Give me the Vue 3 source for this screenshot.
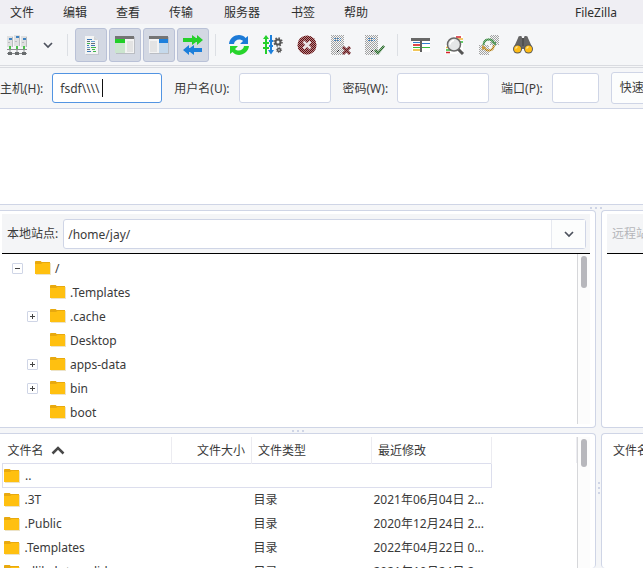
<script setup>
import { ref } from 'vue'

const menus = ['文件', '编辑', '查看', '传输', '服务器', '书签', '帮助']

const fields = ref([
  { id: 'host', label: '主机(H):', value: 'fsdf\\\\\\\\', size: 'large', type: 'text', focused: true },
  { id: 'user', label: '用户名(U):', value: '', size: 'medium', type: 'text' },
  { id: 'pass', label: '密码(W):', value: '', size: 'medium', type: 'password' },
  { id: 'port', label: '端口(P):', value: '', size: 'small', type: 'text' }
])

const localPath = ref('/home/jay/')

const tree = [
  { name: '/', level: 'root', toggle: '−' },
  { name: '.Templates', level: 'child' },
  { name: '.cache', level: 'child', toggle: '+' },
  { name: 'Desktop', level: 'child' },
  { name: 'apps-data', level: 'child', toggle: '+' },
  { name: 'bin', level: 'child', toggle: '+' },
  { name: 'boot', level: 'child' }
]

const files = [
  { name: '..', type: '', date: '', current: true },
  { name: '.3T', type: '目录', date: '2021年06月04日 2...' },
  { name: '.Public', type: '目录', date: '2020年12月24日 2...' },
  { name: '.Templates', type: '目录', date: '2022年04月22日 0...' },
  { name: '.dlibcb-to-valid', type: '目录', date: '2021年10月24日 2...' }
]
</script>

<template>
  <div class="window">
    <svg class="defs" aria-hidden="true">
      <defs>
        <pattern id="dither" width="2" height="2" patternUnits="userSpaceOnUse">
          <rect width="1" height="1" fill="#fff" />
          <rect x="1" y="1" width="1" height="1" fill="#fff" />
        </pattern>
        <mask id="dithered" maskUnits="userSpaceOnUse" x="0" y="0" width="20" height="20">
          <rect width="20" height="20" fill="url(#dither)" />
        </mask>
        <symbol id="folder" viewBox="0 0 16 16">
          <path d="M1 3h15v12H1z" fill="#ece3c8" />
          <path d="M0 2.500Q0 1 1 1h4.500l1 1h8q.5 0 .5.500V14H0z" fill="#ffc010" />
          <path d="M0 2.500Q0 1 1 1h4.500l1 1h8q.5 0 .5.500V3H7.500L6 4H0z" fill="#e8a90f" />
        </symbol>
        <symbol id="chevron" viewBox="0 0 12 12">
          <path d="M2 4l4 4 4-4" fill="none" stroke="#4d525e" stroke-width="1.700" />
        </symbol>
      </defs>
    </svg>

    <nav class="menubar">
      <button v-for="m in menus" :key="m" class="menu" :class="{ wide: m.length > 2 }">{{ m }}</button>
      <span class="title">FileZilla</span>
    </nav>

    <div class="toolbar">
      <button class="tool" aria-label="站点管理器">
        <svg class="icon" viewBox="0 0 20 20">
          <g fill="#dfe0e1"><path d="M0 1h6v11H0zM7 0h6v11H7zM14 1h6v11h-6z" /></g>
          <g fill="#b9bcbf"><path d="M5 2h1v10H5zM12 1h1v10h-1zM19 2h1v10h-1zM1 7h2v1H1zM8 6h2v1H8zM15 7h2v1h-2z" /></g>
          <g fill="#3f83c2"><path d="M2 3h3v2H2zM9 1h3v2H9zM16 3h3v2h-3z" /></g>
          <g fill="#4ac34a"><path d="M2 11h2v3H2zM9 11h2v3H9zM16 11h2v3h-2z" /></g>
          <path d="M0 14.500h20M3 14v4M10 14v4M17 14v4M0 18.500h20" fill="none" stroke="#8b8e90" />
          <path d="M1 17h4v3H1zM8 17h4v3H8zM15 17h4v3h-4z" fill="#686c6e" />
        </svg>
      </button>
      <button class="tool drop" aria-label="站点列表"><svg class="chevron"><use href="#chevron" /></svg></button>
      <span class="sep"></span>
      <button class="tool on" aria-label="消息日志">
        <svg class="icon" viewBox="0 0 20 20">
          <path d="M5 2h9l4 4v14H5z" fill="#c3c7d0" />
          <path d="M4 1h9l4 4v14H4z" fill="#f3f4f4" />
          <path d="M13 1v4h4z" fill="#d2d4d6" />
          <g fill="#3d78b4"><path d="M6 4h5v1H6zM6 10h2v1H6zM10 10h4v1h-4zM6 16h4v1H6z" /></g>
          <g fill="#666f75"><path d="M6 6h3v1H6zM10 8h4v1h-4zM6 14h3v1H6z" /></g>
          <g fill="#3fb54a"><path d="M6 8h3v1H6zM10 12h5v1h-5zM11 14h3v1h-3zM12 16h3v1h-3z" /></g>
          <g fill="#65a3cf"><path d="M10 6h4v1h-4zM6 12h3v1H6z" /></g>
        </svg>
      </button>
      <button class="tool on" aria-label="本地目录树">
        <svg class="icon" viewBox="0 0 20 20">
          <path d="M1 2h19v17H1z" fill="#babdc3" />
          <path d="M0 2h19v16H0z" fill="#f3f3f3" />
          <path d="M0 1h19v3H0z" fill="#747474" />
          <path d="M0 4h10v4H0z" fill="#20cf27" />
          <path d="M0 8h10v10H0z" fill="#cbe5ce" />
          <path d="M12 6h6v11h-6z" fill="#e3e3e3" />
        </svg>
      </button>
      <button class="tool on" aria-label="远程目录树">
        <svg class="icon" viewBox="0 0 20 20">
          <path d="M1 2h19v17H1z" fill="#babdc3" />
          <path d="M0 2h19v16H0z" fill="#f3f3f3" />
          <path d="M0 1h19v3H0z" fill="#747474" />
          <path d="M10 4h9v4h-9z" fill="#1d80dc" />
          <path d="M10 8h9v10h-9z" fill="#c5d9eb" />
          <path d="M1 6h7v11H1z" fill="#e3e3e3" />
        </svg>
      </button>
      <button class="tool on" aria-label="传输队列">
        <svg class="icon" viewBox="0 0 20 20">
          <path d="M0 3h9V0l4 3h1V0l6 5-6 5V7h-1l-4 3V7H0z" fill="#25d02b" />
          <path d="M19 13h-8v-3l-4 3H6v-3l-6 5 6 5v-3h1l4 3v-3h8z" fill="#1c7fdb" />
        </svg>
      </button>
      <span class="sep"></span>
      <button class="tool" aria-label="刷新">
        <svg class="icon" viewBox="0 0 20 20">
          <path d="M0 9C1 0 12-2.500 16.500 3L19 1v8h-8l3-3C11 3 5.500 4.500 5 9z" fill="#1c7ad7" />
          <path d="M20 11c-1 9-12 11.500-16.500 6L1 19v-8h8l-3 3c3 3 8.500 1.500 9-3z" fill="#27d42c" />
        </svg>
      </button>
      <button class="tool" aria-label="处理队列">
        <svg class="icon" viewBox="0 0 20 20">
          <path d="M3 0l3 4H4v3h2v2H4v3h2v2H4v5H2v-5H0v-2h2V9H0V7h2V4H0z" fill="#25cf2b" />
          <path d="M7 0h2v5h1v2H9v3h1v2H9v3h2l-3 4.500L5 15h2v-3H6v-2h1V7H6V5h1z" fill="#1d80dc" />
          <g fill="none" stroke="#555">
            <circle cx="15" cy="7" r="2.500" stroke-width="2" />
            <circle cx="15" cy="7" r="4" stroke-width="1.500" stroke-dasharray="1.500 1.640" />
            <circle cx="16" cy="15" r="1.500" stroke-width="1.500" />
            <circle cx="16" cy="15" r="2.600" stroke-width="1" stroke-dasharray="1 1.040" />
          </g>
        </svg>
      </button>
      <button class="tool" aria-label="取消">
        <svg class="icon" viewBox="0 0 20 20">
          <circle cx="10" cy="10" r="9.500" fill="#b98a8c" />
          <circle cx="10" cy="10" r="9.500" fill="#5f0d10" mask="url(#dithered)" />
          <path d="M6.500 6.500l7 7M13.500 6.500l-7 7" stroke="#e9e4e4" stroke-width="2.500" />
        </svg>
      </button>
      <button class="tool" aria-label="断开连接">
        <svg class="icon" viewBox="0 0 20 20">
          <g mask="url(#dithered)">
            <path d="M0 0h13v20H0z" fill="#a2a2a2" />
            <path d="M6 15h2v2H6z" fill="#222" />
          </g>
          <path d="M3 3.500h7M3 5.500h7" stroke="#4b83b6" stroke-dasharray="2 1" />
          <path d="M12 12l7 7M19 12l-7 7" stroke="#a76f72" stroke-width="2.500" />
          <path d="M12 12l7 7M19 12l-7 7" stroke="#5d1418" stroke-width="2.500" mask="url(#dithered)" />
        </svg>
      </button>
      <button class="tool" aria-label="重新连接">
        <svg class="icon" viewBox="0 0 20 20">
          <g mask="url(#dithered)">
            <path d="M0 0h13v20H0z" fill="#a2a2a2" />
            <path d="M6 15h2v2H6z" fill="#222" />
          </g>
          <path d="M3 3.500h7M3 5.500h7" stroke="#4b83b6" stroke-dasharray="2 1" />
          <path d="M10 15l3 3 6-7" fill="none" stroke="#8fb18f" stroke-width="2.500" />
          <path d="M10 15l3 3 6-7" fill="none" stroke="#286a2b" stroke-width="2.500" mask="url(#dithered)" />
        </svg>
      </button>
      <span class="sep"></span>
      <button class="tool" aria-label="过滤器">
        <svg class="icon" viewBox="0 0 20 20">
          <path d="M1 4h18v13H1z" fill="#fff" />
          <path d="M0 3h19v3H0z" fill="#686868" />
          <path d="M2 7.500h7M11 8.500h8" stroke="#3180cf" />
          <path d="M2 10h7" stroke="#df4a4a" stroke-width="2" />
          <path d="M2 12.500h17" stroke="#36bd3d" />
          <path d="M2 15h7" stroke="#f1c65a" stroke-width="2" />
          <path d="M10 5v12" stroke="#606060" stroke-width="2" />
        </svg>
      </button>
      <button class="tool" aria-label="目录比较">
        <svg class="icon" viewBox="0 0 20 20">
          <path d="M9 0h9v18H9zM0 10h12v9H0z" fill="#fff" />
          <path d="M11 2h5M1 17.500h4" stroke="#d2232a" stroke-width="1.500" />
          <path d="M10 4h8M1 12.500h4" stroke="#f0b93e" stroke-width="1.500" />
          <path d="M1 15h5M15 7h3" stroke="#2fbe36" stroke-width="1.500" />
          <path d="M13 14l5 5" stroke="#555" stroke-width="3" />
          <circle cx="9" cy="9.500" r="6.500" fill="#e4e6e7" stroke="#686868" stroke-width="1.500" />
          <path d="M5 9.500c0-2 2-4 4-4" fill="none" stroke="#fff" stroke-width="1.500" />
        </svg>
      </button>
      <button class="tool" aria-label="同步浏览">
        <svg class="icon" viewBox="0 0 20 20">
          <path d="M11 0h9v10h-9zM0 10h10v10H0z" fill="#a2a2a2" mask="url(#dithered)" />
          <path d="M4.500 10C5 3 13 3 15 8" fill="none" stroke="#83b187" stroke-width="2" />
          <path d="M4.500 10C5 3 13 3 15 8" fill="none" stroke="#3c8d43" stroke-width="2" mask="url(#dithered)" />
          <path d="M12 7h5v4z" fill="#5a985f" />
          <path d="M5 12c2 5 9 5 10-2" fill="none" stroke="#e0c58c" stroke-width="2" />
          <path d="M5 12c2 5 9 5 10-2" fill="none" stroke="#aa7716" stroke-width="2" mask="url(#dithered)" />
          <path d="M3 10v5l4-2z" fill="#c99b40" />
        </svg>
      </button>
      <button class="tool" aria-label="查找文件">
        <svg class="icon" viewBox="0 0 20 20">
          <path d="M5 3q0-2 2-2h1q1 0 1 2h2q0-2 1-2h1q2 0 2 2l4 9-5 5-3-3h-2l-3 3-5-5z" fill="#656565" />
          <path d="M9 3h2v8H9z" fill="#505050" />
          <circle cx="4.500" cy="14" r="4.500" fill="#595959" />
          <circle cx="15.500" cy="14" r="4.500" fill="#595959" />
          <circle cx="4.500" cy="14" r="3.500" fill="#ffbd17" />
          <circle cx="15.500" cy="14" r="3.500" fill="#ffbd17" />
          <path d="M2.500 13.500l2-2M13.500 13.500l2-2" stroke="#ffe39a" stroke-width="1.300" />
        </svg>
      </button>
    </div>

    <form class="quickbar" @submit.prevent>
      <template v-for="f in fields" :key="f.id">
        <label :for="f.id">{{ f.label }}</label>
        <span class="field" :class="[f.size, { focused: f.focused }]">
          <input :id="f.id" v-model="f.value" :type="f.type" autocomplete="off" />
          <span v-if="f.focused" class="caret"></span>
        </span>
      </template>
      <button class="connect">快速连接(Q)</button>
    </form>

    <section class="log"></section>
    <div class="split across outer"><i></i><i></i><i></i></div>

    <main class="panes">
      <div class="side">
        <section class="pane tree-pane">
          <div class="site">
            <label for="local">本地站点:</label>
            <div class="combo">
              <input id="local" v-model="localPath" type="text" />
              <button aria-label="展开路径列表"><svg class="chevron"><use href="#chevron" /></svg></button>
            </div>
          </div>
          <div class="scroller">
            <ul class="tree">
              <li v-for="n in tree" :key="n.name" :class="n.level">
                <button v-if="n.toggle" class="toggle" :aria-label="n.name">
                  <svg viewBox="0 0 11 11">
                    <path d="M3 5.500h5" stroke="#444" />
                    <path v-if="n.toggle === '+'" d="M5.500 3v5" stroke="#444" />
                  </svg>
                </button>
                <span v-else class="toggle-space"></span>
                <svg class="folder"><use href="#folder" /></svg>
                <span class="text">{{ n.name }}</span>
              </li>
            </ul>
            <div class="track"><div class="thumb tall"></div></div>
          </div>
        </section>

        <div class="split across"><i></i><i></i><i></i></div>

        <section class="pane list-pane">
          <div class="scroller">
            <table class="files">
              <colgroup>
                <col class="c-name" /><col class="c-size" /><col class="c-type" /><col class="c-date" /><col />
              </colgroup>
              <thead>
                <tr>
                  <th>文件名
                    <svg class="sort" viewBox="0 0 14 10"><path d="M1.500 8.500L7 3l5.500 5.500" fill="none" stroke="#484848" stroke-width="2.500" /></svg>
                  </th>
                  <th class="right">文件大小</th>
                  <th>文件类型</th>
                  <th>最近修改</th>
                  <th></th>
                </tr>
              </thead>
              <tbody>
                <tr v-for="f in files" :key="f.name" :class="{ current: f.current }">
                  <td><span class="name"><svg class="folder"><use href="#folder" /></svg>{{ f.name }}</span></td>
                  <td></td>
                  <td>{{ f.type }}</td>
                  <td>{{ f.date }}</td>
                  <td></td>
                </tr>
              </tbody>
            </table>
            <div class="track"><div class="thumb"></div></div>
          </div>
        </section>
      </div>

      <div class="split down"><i></i><i></i><i></i></div>

      <div class="side">
        <section class="pane tree-pane">
          <div class="site disabled"><span>远程站点:</span></div>
        </section>
        <div class="split across"></div>
        <section class="pane list-pane"><div class="remote-head">文件名</div></section>
      </div>
    </main>
  </div>
</template>

<style>
body {
  margin: 0;
  overflow: hidden;
}
</style>

<style scoped>
.window {
  display: flex;
  flex-direction: column;
  height: 100vh;
  overflow: hidden;
  background: #f5f6f8;
  color: #3a3a3a;
  font: 12px/18px "Noto Sans", "Noto Sans CJK SC", sans-serif;
  white-space: nowrap;
}
.window * {
  box-sizing: border-box;
}
.defs {
  position: absolute;
  width: 0;
  height: 0;
}
button,
input {
  margin: 0;
  padding: 0;
  border: 0;
  outline: 0;
  background: none;
  color: inherit;
  font: inherit;
}
.menubar {
  display: flex;
  flex: none;
  align-items: center;
  gap: 29px;
  height: 24px;
  padding: 2px 26px 0 10px;
  background: #efeef3;
  color: #2e2e2e;
}
.menu {
  width: 24px;
}
.menu.wide {
  width: 40px;
}
.title {
  margin-left: auto;
}
.toolbar {
  display: flex;
  flex: none;
  align-items: center;
  gap: 2px;
  height: 44px;
  padding: 1px 0 0 1px;
  border-bottom: 3px double #d9dbe0;
}
.tool {
  display: grid;
  flex: none;
  place-items: center;
  width: 32px;
  height: 34px;
  border: 1px solid transparent;
  border-radius: 3px;
}
.tool.drop {
  width: 26px;
}
.tool.on {
  border-color: #b9c1d7;
  background: #d3d8e3;
}
.icon {
  width: 20px;
  height: 20px;
}
.chevron {
  width: 12px;
  height: 12px;
}
.sep {
  flex: none;
  width: 1px;
  height: 22px;
  margin: 0 5px 0 4px;
  background: #dcdfe4;
}
.quickbar {
  display: flex;
  flex: none;
  align-items: center;
  height: 41px;
  border-bottom: 1px solid #cfd5e6;
}
.quickbar label {
  flex: none;
  margin-right: 9px;
  padding-top: 2px;
}
.field {
  position: relative;
  flex: none;
  height: 30px;
  margin-right: 12px;
  border: 1px solid #cfd5e6;
  border-radius: 3px;
  background: #fff;
}
.field input {
  display: block;
  width: 100%;
  height: 100%;
  padding: 0 7px;
}
.large {
  width: 110px;
}
.medium {
  width: 92px;
}
.small {
  width: 47px;
}
.focused {
  border-color: #5294e2;
}
.caret {
  position: absolute;
  top: 5px;
  left: 49px;
  width: 1px;
  height: 18px;
  background: #111;
}
.connect {
  flex: none;
  height: 32px;
  padding: 0 8px;
  border: 1px solid #cfd5e6;
  border-radius: 3px;
  background: #fcfdfd;
}
.log {
  flex: none;
  height: 96px;
  border-bottom: 1px solid #cfd5e6;
  background: #fff;
}
.split {
  display: flex;
  flex: none;
  align-items: center;
  justify-content: center;
  gap: 3px;
}
.split i {
  width: 2px;
  height: 2px;
  background: #cfd5e6;
}
.across {
  height: 5px;
}
.outer {
  justify-content: flex-end;
  padding-right: 41px;
}
.down {
  flex-direction: column;
  justify-content: flex-start;
  padding-top: 272px;
}
.panes {
  display: grid;
  flex: 1;
  grid-template-columns: minmax(0, 1fr) 5px 42px;
  min-height: 0;
}
.side {
  display: flex;
  flex-direction: column;
  min-width: 0;
  min-height: 0;
}
.pane {
  display: flex;
  flex-direction: column;
  overflow: hidden;
  border: 1px solid #cfd5e6;
  border-radius: 4px;
  background: #fff;
}
.side:first-child .pane {
  border-left: 0;
  border-top-left-radius: 0;
  border-bottom-left-radius: 0;
}
.side:last-child .pane {
  border-right: 0;
  border-top-right-radius: 0;
  border-bottom-right-radius: 0;
}
.tree-pane {
  flex: none;
  height: 218px;
  padding: 3px 5px 3px 2px;
}
.list-pane {
  flex: 1;
  min-height: 0;
  padding: 3px 5px 0 2px;
  border-bottom: 0;
}
.side:last-child .pane {
  padding-right: 0;
  padding-left: 5px;
}
.site {
  display: flex;
  flex: none;
  align-items: center;
  gap: 5px;
  height: 40px;
  padding: 0 4px 0 5px;
  border-bottom: 1px solid #000;
  background: #f4f5f7;
}
.disabled {
  color: #b4b5ba;
}
.combo {
  display: flex;
  flex: 1;
  height: 30px;
  border: 1px solid #cfd5e6;
  border-radius: 3px;
  background: #fff;
}
.combo input {
  flex: 1;
  min-width: 0;
  padding: 2px 4px 0;
}
.combo button {
  display: grid;
  place-items: center;
  width: 34px;
  border-left: 1px solid #e6e9f0;
  background: #fcfdfd;
}
.scroller {
  display: flex;
  flex: 1;
  min-height: 0;
  overflow: hidden;
}
.tree {
  flex: 1;
  margin: 0;
  padding: 2px 0 0;
  list-style: none;
}
.tree li {
  display: flex;
  align-items: center;
  height: 24px;
}
.text {
  padding-top: 2px;
}
.root {
  padding-left: 10px;
}
.child {
  padding-left: 25px;
}
.toggle,
.toggle-space {
  flex: none;
  width: 11px;
  height: 11px;
  margin-right: 12px;
}
.toggle {
  border: 1px solid #cfd5e6;
  border-radius: 1px;
}
.toggle svg {
  display: block;
  width: 11px;
  height: 11px;
  margin: -1px;
}
.folder {
  flex: none;
  width: 16px;
  height: 16px;
  margin-right: 4px;
}
.track {
  flex: none;
  width: 13px;
  padding: 2px 3px;
  border-left: 1px solid #d6d7da;
  background: #fcfcfc;
}
.thumb {
  width: 6px;
  height: 28px;
  border-radius: 3px;
  background: #b7b7bc;
}
.thumb.tall {
  height: 32px;
}
.files {
  flex: 1;
  width: 0;
  height: 0;
  border-collapse: collapse;
  table-layout: fixed;
}
.c-name {
  width: 169px;
}
.c-size {
  width: 80px;
}
.c-type,
.c-date {
  width: 120px;
}
.files th {
  height: 26px;
  padding: 2px 6px 0;
  border-right: 1px solid #ececf1;
  font-weight: 400;
  text-align: left;
}
.files th.right {
  text-align: right;
}
.files th:first-child {
  padding-left: 5px;
}
.files td {
  height: 24px;
  padding: 2px 2px 0;
  overflow: hidden;
}
.files td:first-child {
  padding-left: 1px;
}
.sort {
  width: 14px;
  height: 10px;
  margin-left: 4px;
}
.current td {
  border-top: 1px solid #dcdeed;
  border-bottom: 1px solid #dcdeed;
}
.current td:first-child {
  border-left: 1px solid #dcdeed;
}
.current td:nth-child(4) {
  border-right: 1px solid #dcdeed;
}
.current td:last-child {
  border: 0;
}
.name {
  display: flex;
  align-items: center;
  gap: 1px;
}
.remote-head {
  padding: 5px 6px;
}
</style>
